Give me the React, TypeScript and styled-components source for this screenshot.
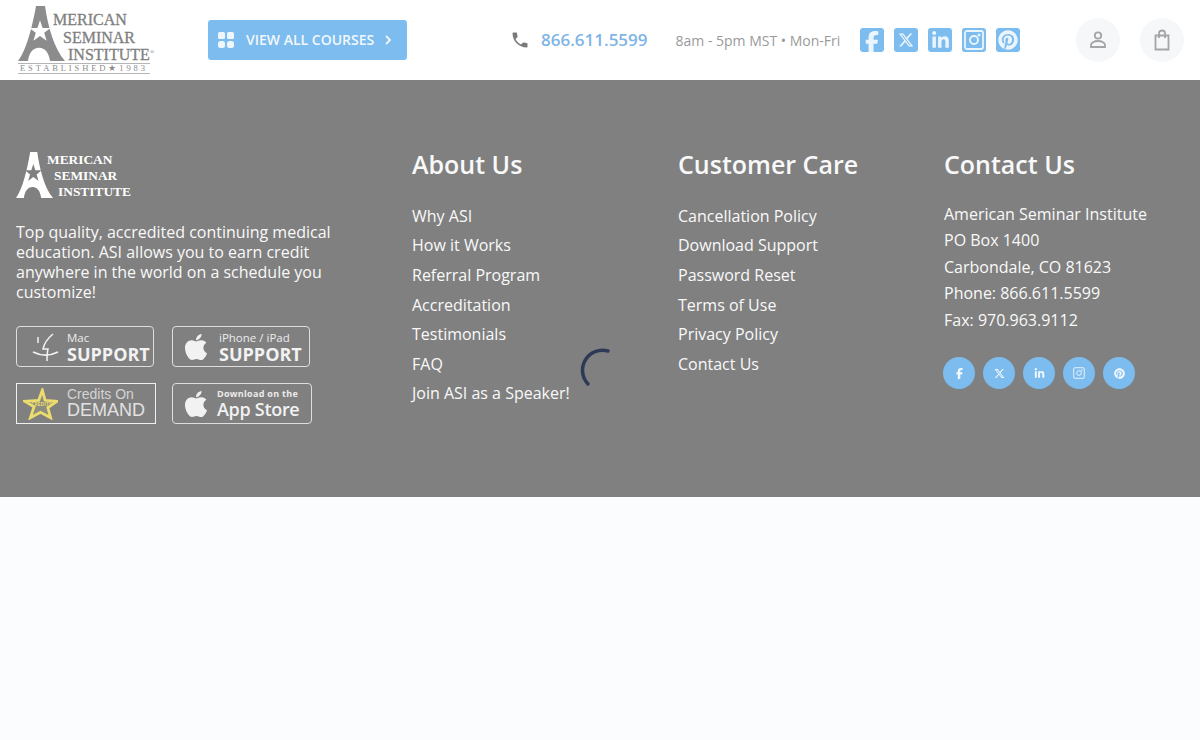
import React from 'react';
import styled, { createGlobalStyle } from 'styled-components';
import { FaApple, FaFacebookF, FaLinkedinIn, FaPinterest, FaXTwitter } from 'react-icons/fa6';
import { MdPhone } from 'react-icons/md';

const Global = createGlobalStyle`
  html, body { margin: 0; padding: 0; background: #fbfcfe; }
  body { font-family: "Open Sans", "Liberation Sans", sans-serif; }
  a { color: inherit; text-decoration: none; }
`;

const Page = styled.div`
  position: relative;
  width: 1200px;
  height: 740px;
  overflow: hidden;
`;

// Header
const Header = styled.header`
  display: flex;
  align-items: center;
  height: 80px;
  background: #fff;
  padding: 0 16px 0 18px;
  box-sizing: border-box;
`;

const LogoWrap = styled.div<{ $w: number; $h: number; $c: string }>`
  position: relative;
  flex: none;
  width: ${(p) => p.$w}px;
  height: ${(p) => p.$h}px;
  color: ${(p) => p.$c};
  font-family: "Liberation Serif", serif;
`;

const LogoMark = styled.svg`
  position: absolute;
  left: 0;
  top: 0;
`;

const LogoLine = styled.span<{ $x: number; $y: number; $s: number; $bold?: boolean }>`
  position: absolute;
  left: ${(p) => p.$x}px;
  top: ${(p) => p.$y}px;
  font-size: ${(p) => p.$s}px;
  line-height: 1;
  white-space: nowrap;
  font-weight: ${(p) => (p.$bold ? 700 : 400)};
  -webkit-text-stroke: ${(p) => (p.$bold ? 0 : 0.3)}px currentColor;
`;

const Registered = styled.sup`
  font-size: 6px;
  -webkit-text-stroke: 0;
`;

const Established = styled.div`
  position: absolute;
  left: 0;
  top: 57px;
  box-sizing: border-box;
  width: 132px;
  padding-left: 2px;
  border-top: 1px solid #b5b5b5;
  border-bottom: 1px solid #b5b5b5;
  font-size: 8.5px;
  line-height: 9px;
  letter-spacing: 2.9px;
  white-space: nowrap;
  color: #8b8b8b;
`;

const CoursesButton = styled.a`
  display: flex;
  align-items: center;
  flex: none;
  box-sizing: border-box;
  width: 199px;
  height: 40px;
  margin-left: 53px;
  padding: 0 0 1px 10px;
  border-radius: 3px;
  background: #7cbcee;
  color: #f2f8fe;
  font-size: 14px;
  font-weight: 600;
`;

const GridIcon = styled.svg`
  width: 16px;
  height: 16px;
  margin-right: 12px;
  fill: #eef6fd;
`;

const Chevron = styled.svg`
  width: 8px;
  height: 12px;
  margin-left: 10px;
  fill: none;
  stroke: #eef6fd;
  stroke-width: 1.8;
`;

const PhoneIcon = styled(MdPhone)`
  flex: none;
  margin-left: 103px;
  width: 20px;
  height: 20px;
  color: #7a7a7a;
`;

const PhoneNumber = styled.a`
  margin: 0 0 2px 11px;
  color: #7fb5e6;
  font-size: 17px;
  font-weight: 600;
  white-space: nowrap;
`;

const Hours = styled.span`
  margin-left: 28px;
  color: #9a9a9a;
  font-size: 14px;
  white-space: nowrap;
`;

const SocialRow = styled.div`
  display: flex;
  gap: 10px;
  margin-left: 20px;
`;

const SocialSquare = styled.a`
  display: flex;
  align-items: center;
  justify-content: center;
  width: 24px;
  height: 24px;
  border-radius: 3px;
  background: #7cbcee;
  color: #eaf5fd;
  overflow: hidden;
`;

const RoundButton = styled.a<{ $first?: boolean }>`
  display: flex;
  align-items: center;
  justify-content: center;
  flex: none;
  width: 44px;
  height: 44px;
  border-radius: 50%;
  background: #f6f7f9;
  margin-left: ${(p) => (p.$first ? 56 : 20)}px;
`;

const LineIcon = styled.svg`
  width: 20px;
  height: 22px;
  fill: none;
  stroke: #a5a5a5;
  stroke-width: 1.8;
`;

// Footer
const Footer = styled.footer`
  display: grid;
  grid-template-columns: 396px 266px 266px 1fr;
  height: 417px;
  box-sizing: border-box;
  padding: 72px 16px 0;
  background: #808080;
  color: #f9f9f9;
`;

const Blurb = styled.p`
  width: 330px;
  margin: 24px 0 0;
  font-size: 16px;
  line-height: 20px;
`;

const BadgeGrid = styled.div`
  display: grid;
  grid-template-columns: 156px 1fr;
  row-gap: 16px;
  margin-top: 24px;
`;

const Badge = styled.a<{ $w: number; $square?: boolean }>`
  display: flex;
  align-items: center;
  box-sizing: border-box;
  width: ${(p) => p.$w}px;
  height: 41px;
  border: 1px solid ${(p) => (p.$square ? '#f0f0f0' : '#dedede')};
  border-radius: ${(p) => (p.$square ? 0 : 4)}px;
  color: #f2f2f2;
`;

const BadgeGlyph = styled.span<{ $w?: number; $pad?: number }>`
  display: flex;
  justify-content: center;
  flex: none;
  box-sizing: border-box;
  width: ${(p) => p.$w ?? 46}px;
  padding-left: ${(p) => p.$pad ?? 0}px;
  font-size: 30px;
`;

const BadgeText = styled.span`
  display: flex;
  flex-direction: column;
  margin-top: 2px;
`;

const BadgeSmall = styled.span`
  font-size: 11.5px;
  line-height: 13px;
  color: #ececec;
  white-space: nowrap;
`;

const BadgeBig = styled.span`
  font-size: 18px;
  line-height: 20px;
  font-weight: 700;
  white-space: nowrap;
`;

const DemandText = styled(BadgeText)`
  margin: 2px 0 0 4px;
`;

const DemandSmall = styled(BadgeSmall)`
  font-family: "Liberation Sans", sans-serif;
  font-size: 14px;
  line-height: 11px;
  color: #d4d4d4;
`;

const DemandBig = styled(BadgeBig)`
  font-family: "Liberation Sans", sans-serif;
  font-weight: 400;
  font-size: 18px;
  color: #e2e2e2;
`;

const StoreText = styled(BadgeText)`
  margin: 0 0 0 -2px;
`;

const StoreSmall = styled(BadgeSmall)`
  font-size: 9px;
  line-height: 12px;
  font-weight: 700;
  letter-spacing: 0.3px;
`;

const StoreBig = styled(BadgeBig)`
  font-weight: 600;
  font-size: 18px;
  line-height: 19px;
  letter-spacing: -0.3px;
`;

const Heading = styled.h3`
  margin: 0 0 25.85px;
  font-size: 25px;
  line-height: 24px;
  font-weight: 600;
`;

const LinkList = styled.ul`
  list-style: none;
  margin: 0;
  padding: 0;
  font-size: 16px;
  line-height: 29.6px;
`;

const Contact = styled.div`
  margin-top: -1.15px;
  font-size: 16px;
  line-height: 26.5px;
`;

const CircleRow = styled.div`
  display: flex;
  gap: 8px;
  margin: 24px 0 0 -1px;
`;

const Circle = styled.a`
  display: flex;
  align-items: center;
  justify-content: center;
  width: 32px;
  height: 32px;
  border-radius: 50%;
  background: #7cbcee;
  color: #f1f8fe;
  font-size: 11px;
`;

const Spinner = styled.svg`
  position: absolute;
  left: 576px;
  top: 346px;
  width: 48px;
  height: 48px;
  fill: none;
  stroke: #2c3a55;
  stroke-width: 3.5;
  stroke-linecap: round;
`;

const InstaIcon = ({ size, stroke }: { size: number; stroke: number }) => (
  <svg width={size} height={size} viewBox="0 0 24 24" fill="none" stroke="currentColor" strokeWidth={stroke}>
    <rect x="3" y="3" width="18" height="18" rx="2" />
    <circle cx="12" cy="12" r="4" />
    <circle cx="17" cy="7" r="0.6" fill="currentColor" />
  </svg>
);

const LogoA = ({ w, h, color, star }: { w: number; h: number; color: string; star: string }) => (
  <LogoMark width={w} height={h} viewBox="0 0 47 54" preserveAspectRatio="none">
    <path fill={color} d="M18 0H27C30 20 36 42 47 54H32C31 46 27 41 21 41C15 41 11 46 10 54H0C8 44 14 22 18 0Z" />
    <path fill={star} d="M22 14l2.600 7.500h8l-6.400 4.800 2.400 7.700-6.600-4.600-6.600 4.600 2.400-7.700-6.400-4.800h8z" />
  </LogoMark>
);

const HeaderLogo = () => (
  <LogoWrap $w={137} $h={68} $c="#808080">
    <LogoA w={47} h={55} color="#8c8c8c" star="#fff" />
    <LogoLine $x={35} $y={6} $s={16}>MERICAN</LogoLine>
    <LogoLine $x={45} $y={24} $s={16}>SEMINAR</LogoLine>
    <LogoLine $x={50} $y={41} $s={16}>
      INSTITUTE<Registered>®</Registered>
    </LogoLine>
    <Established>ESTABLISHED★1983</Established>
  </LogoWrap>
);

const FooterLogo = () => (
  <LogoWrap $w={116} $h={46} $c="#fff">
    <LogoA w={37} h={46} color="#fff" star="#808080" />
    <LogoLine $x={31} $y={0.5} $s={13.4} $bold>MERICAN</LogoLine>
    <LogoLine $x={38} $y={16.5} $s={13.4} $bold>SEMINAR</LogoLine>
    <LogoLine $x={42} $y={32.5} $s={13.4} $bold>INSTITUTE</LogoLine>
  </LogoWrap>
);

const MacFace = () => (
  <svg width="30" height="32" viewBox="0 0 30 32" fill="none" stroke="#f2f2f2" strokeWidth="1.5">
    <path d="M23 3C17 8 14 13 13 18H18C17 22 17 26 17 30" />
    <path d="M8 6v6" />
    <path d="M3 21C11 25 20 25 28 21" />
  </svg>
);

const CreditStar = () => (
  <svg width="35" height="32" viewBox="0 0 38 34">
    <path
      d="M21 2l3 11 13 1-10 7 3 11-11-6-11 6 4-12L2 14l15-1z"
      fill="#8d8c80"
      stroke="#ecdc6e"
      strokeWidth="3"
    />
    <text x="20" y="19" textAnchor="middle" fontSize="5.500" fontWeight="700" fill="#e6d86c">CREDITS</text>
  </svg>
);

const aboutLinks = ['Why ASI', 'How it Works', 'Referral Program', 'Accreditation', 'Testimonials', 'FAQ', 'Join ASI as a Speaker!'];
const careLinks = ['Cancellation Policy', 'Download Support', 'Password Reset', 'Terms of Use', 'Privacy Policy', 'Contact Us'];
const contactLines = ['American Seminar Institute', 'PO Box 1400', 'Carbondale, CO 81623', 'Phone: 866.611.5599', 'Fax: 970.963.9112'];

export default function App() {
  return (
    <Page>
      <Global />
      <Header>
        <HeaderLogo />
        <CoursesButton href="#">
          <GridIcon viewBox="0 0 16 16">
            <rect x="0" y="0" width="7" height="7" rx="1.500" />
            <rect x="9" y="0" width="7" height="7" rx="1.500" />
            <rect x="0" y="9" width="7" height="7" rx="2.500" />
            <rect x="9" y="9" width="7" height="7" rx="2.500" />
          </GridIcon>
          VIEW ALL COURSES
          <Chevron viewBox="0 0 8 12">
            <path d="M2 2l4 4-4 4" />
          </Chevron>
        </CoursesButton>
        <PhoneIcon />
        <PhoneNumber href="#">866.611.5599</PhoneNumber>
        <Hours>8am - 5pm MST • Mon-Fri</Hours>
        <SocialRow>
          <SocialSquare href="#"><FaFacebookF size={22} style={{ marginTop: 4 }} /></SocialSquare>
          <SocialSquare href="#"><FaXTwitter size={16} /></SocialSquare>
          <SocialSquare href="#"><FaLinkedinIn size={19} /></SocialSquare>
          <SocialSquare href="#"><InstaIcon size={24} stroke={1.8} /></SocialSquare>
          <SocialSquare href="#"><FaPinterest size={20} /></SocialSquare>
        </SocialRow>
        <RoundButton href="#" $first>
          <LineIcon viewBox="0 0 20 22">
            <circle cx="10" cy="6.500" r="3.200" />
            <path d="M3 18v-2c0-2 3-4 7-4s7 2 7 4v2z" />
          </LineIcon>
        </RoundButton>
        <RoundButton href="#">
          <LineIcon viewBox="0 0 20 22">
            <path d="M3.500 6.500h13v14h-13z" />
            <path d="M7 9V4c0-1.500 1-2.500 3-2.500s3 1 3 2.500v5" />
          </LineIcon>
        </RoundButton>
      </Header>

      <Footer>
        <div>
          <FooterLogo />
          <Blurb>
            Top quality, accredited continuing medical education. ASI allows you to earn credit anywhere in the world on a schedule you customize!
          </Blurb>
          <BadgeGrid>
            <Badge href="#" $w={138}>
              <BadgeGlyph $w={50} $pad={6}><MacFace /></BadgeGlyph>
              <BadgeText>
                <BadgeSmall>Mac</BadgeSmall>
                <BadgeBig>SUPPORT</BadgeBig>
              </BadgeText>
            </Badge>
            <Badge href="#" $w={138}>
              <BadgeGlyph><FaApple /></BadgeGlyph>
              <BadgeText>
                <BadgeSmall>iPhone / iPad</BadgeSmall>
                <BadgeBig>SUPPORT</BadgeBig>
              </BadgeText>
            </Badge>
            <Badge href="#" $w={140} $square>
              <BadgeGlyph><CreditStar /></BadgeGlyph>
              <DemandText>
                <DemandSmall>Credits On</DemandSmall>
                <DemandBig>DEMAND</DemandBig>
              </DemandText>
            </Badge>
            <Badge href="#" $w={140}>
              <BadgeGlyph><FaApple /></BadgeGlyph>
              <StoreText>
                <StoreSmall>Download on the</StoreSmall>
                <StoreBig>App Store</StoreBig>
              </StoreText>
            </Badge>
          </BadgeGrid>
        </div>
        <div>
          <Heading>About Us</Heading>
          <LinkList>
            {aboutLinks.map((l) => <li key={l}><a href="#">{l}</a></li>)}
          </LinkList>
        </div>
        <div>
          <Heading>Customer Care</Heading>
          <LinkList>
            {careLinks.map((l) => <li key={l}><a href="#">{l}</a></li>)}
          </LinkList>
        </div>
        <div>
          <Heading>Contact Us</Heading>
          <Contact>
            {contactLines.map((l) => <div key={l}>{l}</div>)}
          </Contact>
          <CircleRow>
            <Circle href="#"><FaFacebookF /></Circle>
            <Circle href="#"><FaXTwitter /></Circle>
            <Circle href="#"><FaLinkedinIn /></Circle>
            <Circle href="#"><InstaIcon size={14} stroke={1.6} /></Circle>
            <Circle href="#"><FaPinterest /></Circle>
          </CircleRow>
        </div>
      </Footer>
      <Spinner viewBox="0 0 48 48">
        <path d="M32 5A20 20 0 0 0 12 38" />
      </Spinner>
    </Page>
  );
}
